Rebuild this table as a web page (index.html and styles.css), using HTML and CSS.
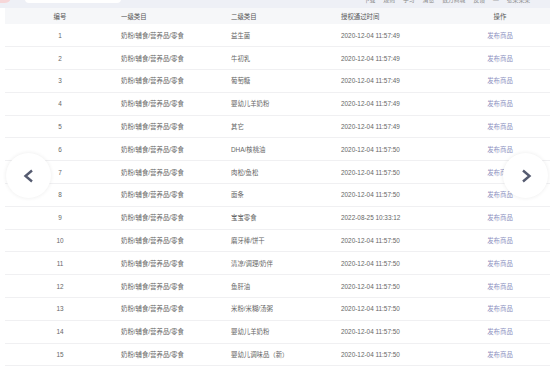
FILE: index.html
```html
<!DOCTYPE html>
<html>
<head>
    <meta charset="UTF-8">
    <title>授权商品</title>
    <link rel="stylesheet" href="styles.css">
</head>
<body>
    <div class="topbar">
        <div class="topbar-inner">
            <span class="logo-dot"></span>
            <span class="search-box"></span>
            <div class="nav">
                <span>下载</span>
                <span>规则</span>
                <span>学习</span>
                <span>消息</span>
                <span>数万商城</span>
                <span>反馈</span>
                <span>—</span>
                <span>张某某某</span>
            </div>
        </div>
    </div>

    <div class="table-wrap">
        <table class="grid">
            <thead>
                <tr>
                    <th class="col-num">编号</th>
                    <th>一级类目</th>
                    <th>二级类目</th>
                    <th>授权通过时间</th>
                    <th class="col-op">操作</th>
                </tr>
            </thead>
            <tbody>
                <tr><td class="col-num">1</td><td>奶粉/辅食/营养品/零食</td><td>益生菌</td><td>2020-12-04 11:57:49</td><td class="col-op"><a href="#">发布商品</a></td></tr>
                <tr><td class="col-num">2</td><td>奶粉/辅食/营养品/零食</td><td>牛初乳</td><td>2020-12-04 11:57:49</td><td class="col-op"><a href="#">发布商品</a></td></tr>
                <tr><td class="col-num">3</td><td>奶粉/辅食/营养品/零食</td><td>葡萄糖</td><td>2020-12-04 11:57:49</td><td class="col-op"><a href="#">发布商品</a></td></tr>
                <tr><td class="col-num">4</td><td>奶粉/辅食/营养品/零食</td><td>婴幼儿羊奶粉</td><td>2020-12-04 11:57:49</td><td class="col-op"><a href="#">发布商品</a></td></tr>
                <tr><td class="col-num">5</td><td>奶粉/辅食/营养品/零食</td><td>其它</td><td>2020-12-04 11:57:49</td><td class="col-op"><a href="#">发布商品</a></td></tr>
                <tr><td class="col-num">6</td><td>奶粉/辅食/营养品/零食</td><td>DHA/核桃油</td><td>2020-12-04 11:57:50</td><td class="col-op"><a href="#">发布商品</a></td></tr>
                <tr><td class="col-num">7</td><td>奶粉/辅食/营养品/零食</td><td>肉松/鱼松</td><td>2020-12-04 11:57:50</td><td class="col-op"><a href="#">发布商品</a></td></tr>
                <tr><td class="col-num">8</td><td>奶粉/辅食/营养品/零食</td><td>面条</td><td>2020-12-04 11:57:50</td><td class="col-op"><a href="#">发布商品</a></td></tr>
                <tr><td class="col-num">9</td><td>奶粉/辅食/营养品/零食</td><td>宝宝零食</td><td>2022-08-25 10:33:12</td><td class="col-op"><a href="#">发布商品</a></td></tr>
                <tr><td class="col-num">10</td><td>奶粉/辅食/营养品/零食</td><td>磨牙棒/饼干</td><td>2020-12-04 11:57:50</td><td class="col-op"><a href="#">发布商品</a></td></tr>
                <tr><td class="col-num">11</td><td>奶粉/辅食/营养品/零食</td><td>清凉/调理/奶伴</td><td>2020-12-04 11:57:50</td><td class="col-op"><a href="#">发布商品</a></td></tr>
                <tr><td class="col-num">12</td><td>奶粉/辅食/营养品/零食</td><td>鱼肝油</td><td>2020-12-04 11:57:50</td><td class="col-op"><a href="#">发布商品</a></td></tr>
                <tr><td class="col-num">13</td><td>奶粉/辅食/营养品/零食</td><td>米粉/米糊/汤粥</td><td>2020-12-04 11:57:50</td><td class="col-op"><a href="#">发布商品</a></td></tr>
                <tr><td class="col-num">14</td><td>奶粉/辅食/营养品/零食</td><td>婴幼儿羊奶粉</td><td>2020-12-04 11:57:50</td><td class="col-op"><a href="#">发布商品</a></td></tr>
                <tr><td class="col-num">15</td><td>奶粉/辅食/营养品/零食</td><td>婴幼儿调味品（新）</td><td>2020-12-04 11:57:50</td><td class="col-op"><a href="#">发布商品</a></td></tr>
            </tbody>
        </table>
        <div class="footer-line">
            <span class="mark green"></span>
            <span class="mark grey"></span>
        </div>
    </div>

    <button class="pager prev" aria-label="上一页">
        <svg width="14" height="14" viewBox="0 0 14 14"><path d="M10 1.5 L3.5 7 L10 12.5" fill="none" stroke="#555b70" stroke-width="2.4" stroke-linejoin="miter"/></svg>
    </button>
    <button class="pager next" aria-label="下一页">
        <svg width="14" height="14" viewBox="0 0 14 14"><path d="M4 1.5 L10.5 7 L4 12.5" fill="none" stroke="#555b70" stroke-width="2.4" stroke-linejoin="miter"/></svg>
    </button>
</body>
</html>
```

FILE: styles.css
```css
body {
    margin: 0;
    width: 550px;
    height: 373px;
    overflow: hidden;
    background: #ffffff;
    font-family: "Liberation Sans", "Noto Sans CJK SC", sans-serif;
    color: #666;
}
.topbar {
    height: 8px;
    background: #eef0f6;
    overflow: hidden;
}
.topbar-inner {
    display: flex;
    align-items: flex-start;
    height: 8px;
    margin-top: -5px;
}
.logo-dot {
    width: 11px;
    height: 8px;
    background: #f6d6d8;
    border-radius: 0 0 6px 0;
}
.search-box {
    width: 96px;
    height: 8px;
    margin-left: 14px;
    background: #fff;
    border-radius: 5px;
}
.nav {
    display: flex;
    gap: 8px;
    margin-left: auto;
    margin-right: 20px;
    font-size: 5.8px;
    line-height: 9px;
    margin-top: 1px;
    color: #888;
}
.table-wrap {
    padding-left: 5px;
}
.grid {
    width: 550px;
    table-layout: fixed;
    border-collapse: collapse;
    font-size: 6.4px;
}
.grid th {
    height: 16px;
    background: #f6f7f9;
    font-weight: normal;
    color: #555;
    text-align: left;
    padding: 0 0 0 6px;
}
.grid td {
    height: 22.8px;
    padding: 0 0 0 6px;
    border-bottom: 1px solid #f0f0f2;
    box-sizing: border-box;
    white-space: nowrap;
}
.grid .col-num,
.grid .col-op {
    text-align: center;
    padding: 0;
}
.grid a {
    color: #8d90c0;
    text-decoration: none;
}
.footer-line {
    position: relative;
    height: 3px;
    margin-top: 12px;
    border-top: 1px solid #e6e6e8;
}
.mark {
    position: absolute;
    top: 1px;
    height: 2px;
}
.mark.green {
    left: 335px;
    width: 6px;
    background: #bfe8c9;
}
.mark.grey {
    left: 371px;
    width: 3px;
    background: #bbb;
}
.pager {
    position: absolute;
    top: 153px;
    width: 45px;
    height: 45px;
    border: none;
    border-radius: 50%;
    background: #fff;
    box-shadow: 0 0 4px rgba(0,0,0,0.08);
    display: flex;
    align-items: center;
    justify-content: center;
    padding: 0;
    cursor: pointer;
}
.pager.prev {
    left: 6px;
}
.pager.next {
    left: 503px;
}
```
